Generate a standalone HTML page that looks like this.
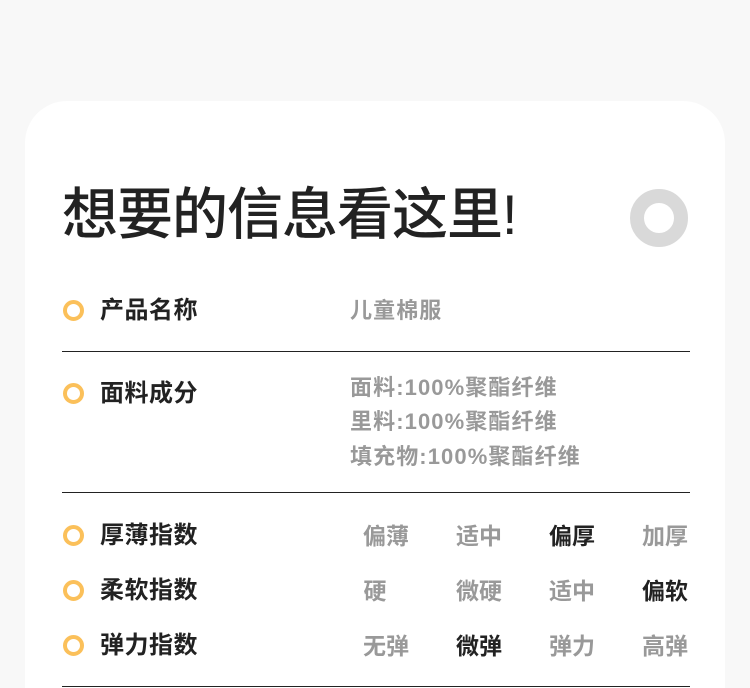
<!DOCTYPE html>
<html><head><meta charset="utf-8"><style>
*{margin:0;padding:0;box-sizing:border-box}
html,body{width:750px;height:688px;overflow:hidden}
body{background:#f8f8f8;font-family:"Liberation Sans","Noto Sans CJK SC",sans-serif;position:relative}
.card{position:absolute;left:25px;top:101px;width:700px;height:587px;background:#fff;border-radius:42px 42px 0 0}
.t{position:absolute;left:62px;top:180px;font-size:56px;font-weight:500;color:#222;line-height:70px;letter-spacing:-1px}
.gr{position:absolute;left:630px;top:189px;width:58px;height:58px;border-radius:50%;border:14px solid #d9d9d9}
.yr{position:absolute;left:63px;width:21px;height:21px;border-radius:50%;border:4px solid #fbc05a}
.lb{position:absolute;left:100px;font-size:24px;font-weight:bold;color:#222;line-height:30px;letter-spacing:0.5px}
.v{position:absolute;font-size:22px;color:#999;line-height:30px;font-weight:bold;letter-spacing:1.1px}
.o{position:absolute;width:60px;text-align:center;font-size:23px;font-weight:bold;color:#999;line-height:30px}
.d{color:#222}
.hr{position:absolute;left:62px;width:628px;height:1px;background:#222}
</style></head><body>
<div class="card"></div>
<div class="t">想要的信息看这里!</div>
<div class="gr"></div>

<div class="yr" style="top:300px"></div><div class="lb" style="top:296px">产品名称</div>
<div class="v" style="left:350px;top:296px">儿童棉服</div>
<div class="hr" style="top:351px"></div>

<div class="yr" style="top:383px"></div><div class="lb" style="top:379px">面料成分</div>
<div class="v" style="left:350px;top:373px">面料:100%聚酯纤维</div>
<div class="v" style="left:350px;top:407px">里料:100%聚酯纤维</div>
<div class="v" style="left:350px;top:442px">填充物:100%聚酯纤维</div>
<div class="hr" style="top:492px"></div>

<div class="yr" style="top:525px"></div><div class="lb" style="top:521px">厚薄指数</div>
<div class="o" style="left:356px;top:521px">偏薄</div><div class="o" style="left:449px;top:521px">适中</div><div class="o d" style="left:542px;top:521px">偏厚</div><div class="o" style="left:635px;top:521px">加厚</div>

<div class="yr" style="top:580px"></div><div class="lb" style="top:576px">柔软指数</div>
<div class="o" style="left:345px;top:576px">硬</div><div class="o" style="left:449px;top:576px">微硬</div><div class="o" style="left:542px;top:576px">适中</div><div class="o d" style="left:635px;top:576px">偏软</div>

<div class="yr" style="top:635px"></div><div class="lb" style="top:631px">弹力指数</div>
<div class="o" style="left:356px;top:631px">无弹</div><div class="o d" style="left:449px;top:631px">微弹</div><div class="o" style="left:542px;top:631px">弹力</div><div class="o" style="left:635px;top:631px">高弹</div>
<div class="hr" style="top:686px"></div>
</body></html>
